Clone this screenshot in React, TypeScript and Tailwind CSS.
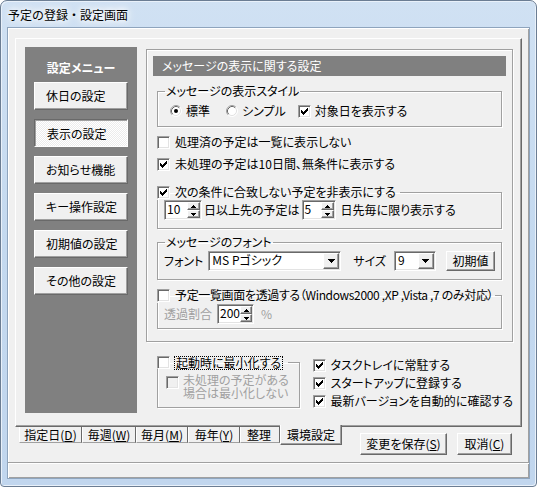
import React from "react";

const raised =
  "border border-t-white border-l-white border-r-[#696969] border-b-[#696969] shadow-[inset_-1px_-1px_0_#a0a0a0] bg-[#f0f0f0]";
const sunken =
  "border border-t-[#a0a0a0] border-l-[#a0a0a0] border-r-white border-b-white shadow-[inset_1px_1px_0_#696969,inset_-1px_-1px_0_#e3e3e3]";
const groupBox =
  "border border-[#a0a0a0] shadow-[inset_1px_1px_0_#fff,1px_1px_0_#fff]";

function Check({ checked, disabled }: { checked?: boolean; disabled?: boolean }) {
  return (
    <span
      className={`flex items-center justify-center w-[13px] h-[13px] shrink-0 ${sunken} ${
        disabled ? "bg-[#f0f0f0]" : "bg-white"
      }`}
    >
      {checked && (
        <svg width="7" height="7" viewBox="0 0 7 7" shapeRendering="crispEdges" className="block">
          <path
            d="M6 0h1v1h-1z M5 1h2v1h-2z M0 2h1v1h-1z M4 2h3v1h-3z M0 3h2v1h-2z M3 3h3v1h-3z M0 4h5v1h-5z M1 5h3v1h-3z M2 6h1v1h-1z"
            fill={disabled ? "#a0a0a0" : "#000"}
          />
        </svg>
      )}
    </span>
  );
}

function Radio({ checked }: { checked?: boolean }) {
  return (
    <svg width="12" height="12" viewBox="0 0 12 12" className="shrink-0 block">
      <circle cx="6" cy="6" r="5" fill="#fff" />
      <path d="M2.11 9.89A5.5 5.5 0 0 1 9.89 2.11" stroke="#a0a0a0" fill="none" />
      <path d="M9.89 2.11A5.5 5.5 0 0 1 2.11 9.89" stroke="#fff" fill="none" />
      <path d="M2.82 9.18A4.5 4.5 0 0 1 9.18 2.82" stroke="#696969" fill="none" />
      <path d="M9.18 2.82A4.5 4.5 0 0 1 2.82 9.18" stroke="#e3e3e3" fill="none" />
      {checked && <circle cx="6" cy="6" r="2" fill="#000" />}
    </svg>
  );
}

function TriUp() {
  return (
    <svg width="5" height="3" viewBox="0 0 5 3" shapeRendering="crispEdges" className="block">
      <path d="M2 0h1v1h1v1h1v1H0V2h1V1h1z" fill="#000" />
    </svg>
  );
}
function TriDown({ big }: { big?: boolean }) {
  if (big)
    return (
      <svg width="7" height="4" viewBox="0 0 7 4" shapeRendering="crispEdges" className="block">
        <path d="M0 0h7v1H6v1H5v1H4v1H3V3H2V2H1V1H0z" fill="#000" />
      </svg>
    );
  return (
    <svg width="5" height="3" viewBox="0 0 5 3" shapeRendering="crispEdges" className="block">
      <path d="M0 0h5v1H4v1H3v1H2V2H1V1H0z" fill="#000" />
    </svg>
  );
}

function Spin({ value, className }: { value: string; className: string }) {
  return (
    <div className={`flex h-[20px] bg-white ${sunken} ${className}`}>
      <span className="flex-1 pl-[2px] pt-[1px] leading-[13px] text-[12px]">{value}</span>
      <div className="flex flex-col w-[14px] h-full py-[1px] pr-[1px]">
        <div className={`flex-1 flex items-center justify-center ${raised}`}>
          <TriUp />
        </div>
        <div className={`flex-1 flex items-center justify-center ${raised}`}>
          <TriDown />
        </div>
      </div>
    </div>
  );
}

function Combo({ value, className }: { value: string; className: string }) {
  return (
    <div className={`flex h-[20px] bg-white ${sunken} ${className}`}>
      <span className="flex-1 pl-[3px] leading-[16px] whitespace-nowrap overflow-hidden">{value}</span>
      <div className="h-full py-[1px] pr-[1px]">
        <div className={`w-[16px] h-full flex items-center justify-center ${raised}`}>
          <TriDown big />
        </div>
      </div>
    </div>
  );
}

function Btn({ children, className }: { children: React.ReactNode; className: string }) {
  return (
    <div className={`flex items-center justify-center whitespace-nowrap ${raised} ${className}`}>
      {children}
    </div>
  );
}

function CheckRow({
  checked,
  disabled,
  children,
  className = "",
}: {
  checked?: boolean;
  disabled?: boolean;
  children: React.ReactNode;
  className?: string;
}) {
  return (
    <div className={`flex items-center h-[16px] gap-[5px] whitespace-nowrap ${className}`}>
      <Check checked={checked} disabled={disabled} />
      <span className={disabled ? "text-[#a0a0a0]" : ""}>{children}</span>
    </div>
  );
}

const menuItems = ["休日の設定", "表示の設定", "お知らせ機能", "キー操作設定", "初期値の設定", "その他の設定"];

function MenuButton({ label, pressed }: { label: string; pressed?: boolean }) {
  if (pressed)
    return (
      <div className="w-[94px] h-[28px] flex items-center pl-[12px] pt-[2px] whitespace-nowrap border border-t-[#696969] border-l-[#696969] border-r-white border-b-white shadow-[inset_1px_1px_0_#a0a0a0] bg-[repeating-conic-gradient(#ffffff_0_25%,#ececec_0_50%)] bg-[length:2px_2px]">
        {label}
      </div>
    );
  return (
    <div className={`w-[94px] h-[28px] flex items-center pl-[11px] whitespace-nowrap ${raised}`}>{label}</div>
  );
}

function Tab({ children, className }: { children: React.ReactNode; className: string }) {
  return (
    <div
      className={`h-[16px] flex items-center justify-center whitespace-nowrap leading-[14px] border-l border-l-white border-r border-r-[#696969] border-b border-b-[#a0a0a0] ${className}`}
    >
      {children}
    </div>
  );
}

export default function App() {
  return (
    <div className="w-[537px] h-[487px] font-['Noto_Sans_CJK_JP',sans-serif] text-[12px] leading-[16px] text-black [font-feature-settings:'palt']">
      <div className="w-full h-full flex flex-col rounded-t-[7px] rounded-b-[4px] border border-[#6b7d93] bg-gradient-to-b from-[#d0e1f3] via-[#c4d9ef] to-[#c1d6ee] shadow-[inset_1px_1px_0_#e9f1fa,inset_-1px_-1px_0_#e9f1fa]">
        {/* title bar */}
        <div className="h-[27px] flex items-center pl-[7px] pt-[1px]">
          <span className="text-[12px] [font-feature-settings:normal] [text-shadow:0_0_5px_#fff,0_0_9px_#fff,0_0_12px_#fff]">
            予定の登録・設定画面
          </span>
        </div>

        {/* client area */}
        <div className="mx-[7px] h-[450px] bg-[#f0f0f0] flex flex-col shadow-[0_0_0_1px_#8ea4bd,inset_1px_1px_0_#fff,inset_-1px_-1px_0_#a0a0a0]">
          {/* tab panel */}
          <div className="ml-[7px] mt-[10px] w-[507px] h-[389px] flex items-start border border-t-white border-l-white border-r-[#696969] border-b-[#696969] shadow-[inset_-1px_-1px_0_#a0a0a0]">
            {/* menu */}
            <div className="ml-[9px] mt-[8px] w-[112px] h-[366px] bg-[#808080] flex flex-col items-center pt-[13px]">
              <div className="text-white font-bold leading-[16px] whitespace-nowrap">設定メニュー</div>
              <div className="mt-[6px] flex flex-col gap-[9px]">
                {menuItems.map((m, i) => (
                  <MenuButton key={m} label={m} pressed={i === 1} />
                ))}
              </div>
            </div>

            {/* right column */}
            <div className="ml-[9px] mt-[10px] w-[367px] flex flex-col">
              <div className={`h-[293px] flex flex-col ${groupBox}`}>
                <div className="ml-[6px] mt-[6px] w-[353px] h-[20px] bg-[#808080] text-white pl-[9px] leading-[20px] whitespace-nowrap">
                  メッセージの表示に関する設定
                </div>

                {/* style group */}
                <fieldset className={`mx-[10px] mt-[7px] pt-[4px] pb-[7px] ${groupBox}`}>
                  <legend className="ml-[7px] px-[1px] leading-[16px]">メッセージの表示スタイル</legend>
                  <div className="flex items-center h-[16px] pl-[12px] whitespace-nowrap">
                    <Radio checked />
                    <span className="ml-[4px]">標準</span>
                    <span className="ml-[16px]">
                      <Radio />
                    </span>
                    <span className="ml-[4px]">シンプル</span>
                    <span className="ml-[12px] flex items-center gap-[4px]">
                      <Check checked />
                      対象日を表示する
                    </span>
                  </div>
                </fieldset>

                <CheckRow className="ml-[10px] mt-[7px]">処理済の予定は一覧に表示しない</CheckRow>
                <CheckRow checked className="ml-[10px] mt-[6px]">
                  未処理の予定は10日間、無条件に表示する
                </CheckRow>

                {/* condition group */}
                <fieldset className={`mx-[10px] mt-[12px] pt-0 pb-[8px] ${groupBox}`}>
                  <legend className="-ml-[1px] pr-[4px] leading-[16px]">
                    <span className="flex items-center gap-[5px] whitespace-nowrap">
                      <Check checked />
                      次の条件に合致しない予定を非表示にする
                    </span>
                  </legend>
                  <div className="flex items-center h-[20px] pl-[6px] whitespace-nowrap">
                    <Spin value="10" className="w-[38px]" />
                    <span className="ml-[2px]">日以上先の予定は</span>
                    <Spin value="5" className="ml-[2px] w-[34px]" />
                    <span className="ml-[5px]">日先毎に限り表示する</span>
                  </div>
                </fieldset>

                {/* font group */}
                <fieldset className={`mx-[10px] mt-[5px] pt-[1px] pb-[8px] ${groupBox}`}>
                  <legend className="ml-[7px] px-[1px] leading-[16px]">メッセージのフォント</legend>
                  <div className="flex items-center h-[20px] pl-[6px] whitespace-nowrap">
                    <span>フォント</span>
                    <Combo value="MS Pゴシック" className="ml-[5px] w-[133px]" />
                    <span className="ml-[12px]">サイズ</span>
                    <Combo value="9" className="ml-[8px] w-[42px]" />
                    <Btn className="ml-[10px] w-[49px] h-[20px]">初期値</Btn>
                  </div>
                </fieldset>

                {/* transparency group */}
                <fieldset className={`mx-[10px] mt-[7px] pt-[1px] pb-[4px] ${groupBox}`}>
                  <legend className="-ml-[1px] pr-[2px] leading-[16px]">
                    <span className="flex items-center gap-[5px] whitespace-nowrap">
                      <Check />
                      <span className="tracking-[-0.35px]">
                        予定一覧画面を透過する（Windows2000 ,XP ,Vista ,7 のみ対応）
                      </span>
                    </span>
                  </legend>
                  <div className="flex items-center h-[20px] pl-[6px] whitespace-nowrap text-[#a0a0a0]">
                    <span>透過割合</span>
                    <Spin value="200" className="ml-[5px] w-[37px] text-black" />
                    <span className="ml-[7px]">%</span>
                  </div>
                </fieldset>
              </div>

              {/* bottom section */}
              <div className="flex items-start">
                <fieldset className={`ml-[11px] mt-[14px] w-[146px] pt-[4px] pb-[8px] ${groupBox}`}>
                  <legend className="-ml-[1px] pr-[6px] leading-[16px]">
                    <span className="flex items-center gap-[5px] whitespace-nowrap">
                      <Check />
                      <span className="outline-1 outline-dotted outline-black leading-[12px] px-[1px]">
                        起動時に最小化する
                      </span>
                    </span>
                  </legend>
                  <div className="flex items-start pl-[8px] gap-[4px]">
                    <span className="mt-[3px]">
                      <Check disabled />
                    </span>
                    <div className="flex flex-col text-[#a0a0a0] leading-[13px] whitespace-nowrap">
                      <span>未処理の予定がある</span>
                      <span>場合は最小化しない</span>
                    </div>
                  </div>
                </fieldset>
                <div className="ml-[13px] mt-[15px] flex flex-col gap-[2px]">
                  <CheckRow checked>タスクトレイに常駐する</CheckRow>
                  <CheckRow checked>スタートアップに登録する</CheckRow>
                  <CheckRow checked>最新バージョンを自動的に確認する</CheckRow>
                </div>
              </div>
            </div>
          </div>

          {/* tabs + buttons */}
          <div className="h-[35px] flex items-start">
            <div className="ml-[11px] flex items-start">
              <Tab className="w-[63px]">
                指定日(<span className="underline">D</span>)
              </Tab>
              <Tab className="w-[54px]">
                毎週(<span className="underline">W</span>)
              </Tab>
              <Tab className="w-[52px]">
                毎月(<span className="underline">M</span>)
              </Tab>
              <Tab className="w-[52px]">
                毎年(<span className="underline">Y</span>)
              </Tab>
              <Tab className="w-[40px] justify-start pl-[6px] overflow-hidden">整理</Tab>
              <div className="relative -mt-[2px] w-[62px] h-[20px] bg-[#f0f0f0] flex items-center justify-center whitespace-nowrap border-l border-l-white border-r border-r-[#696969] border-b border-b-[#696969] shadow-[inset_-1px_-1px_0_#a0a0a0]">
                環境設定
              </div>
            </div>
            <div className="ml-auto mr-[17px] mt-[6px] flex gap-[10px]">
              <Btn className="w-[87px] h-[22px]">
                変更を保存(<span className="underline">S</span>)
              </Btn>
              <Btn className="w-[55px] h-[22px]">
                取消(<span className="underline">C</span>)
              </Btn>
            </div>
          </div>

          {/* status bar */}
          <div className="h-[16px] border-t border-t-[#a0a0a0] shadow-[inset_0_1px_0_#fff]" />
        </div>
      </div>
    </div>
  );
}
